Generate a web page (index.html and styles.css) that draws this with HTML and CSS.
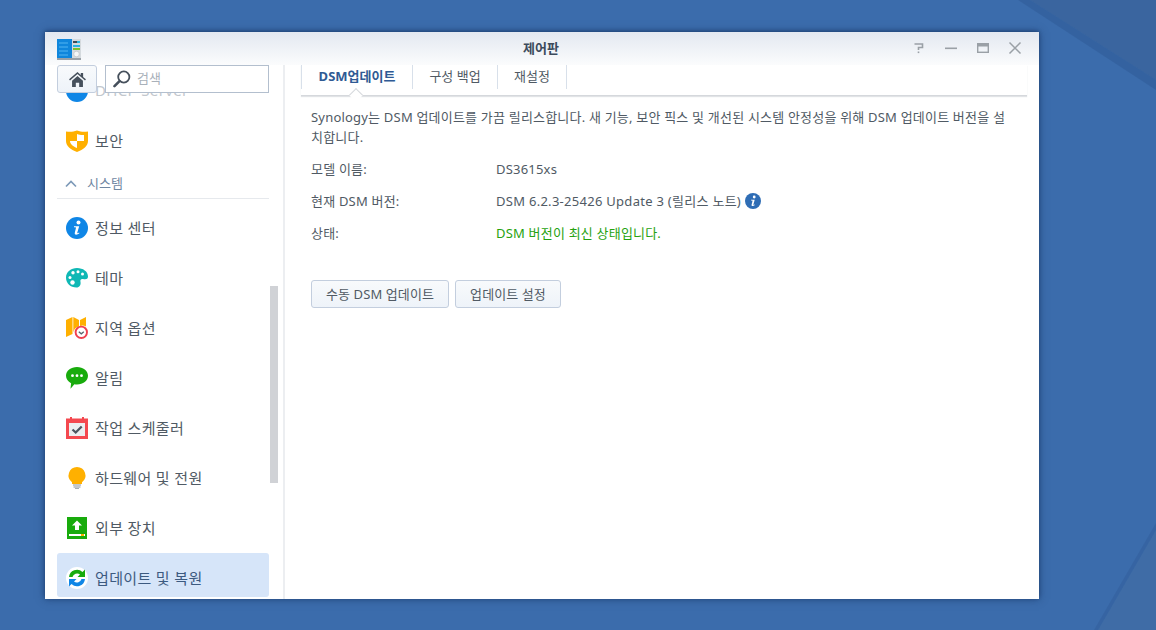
FILE: index.html
```html
<!DOCTYPE html>
<html lang="ko">
<head>
<meta charset="utf-8">
<title>제어판</title>
<link rel="stylesheet" href="styles.css">
</head>
<body>
<div class="desktop">
  <svg class="wallpaper" viewBox="0 0 1156 630" aria-hidden="true">
    <polygon points="1030,0 1156,80 1156,0" fill="#3a659f"/>
    <polygon points="1018,0 1030,0 1156,80 1156,90" fill="#2f5b97" opacity=".55"/>
    <polygon points="1156,530 1098,630 1156,630" fill="#3f6ca6"/>
    <polygon points="1156,530 1098,630 1094,630 1156,523" fill="#2f5b97" opacity=".4"/>
  </svg>
  <section class="window">
    <header class="titlebar">
      <svg class="app-icon" viewBox="0 0 24 22" aria-hidden="true">
        <rect x="0" y="1" width="24" height="20" fill="#d5dade"/>
        <rect x="0" y="1" width="15" height="19" fill="#0f86dc"/>
        <path d="M2 5h9M2 9h9M2 13h9M2 17h9" stroke="#53b5f2" stroke-width="1"/>
        <rect x="0" y="20" width="24" height="2" fill="#9aa1a8"/>
        <rect x="16" y="3" width="7" height="2" fill="#3f4a55"/>
        <rect x="20" y="3" width="3" height="2" fill="#28b4e0"/>
        <rect x="16" y="7" width="7" height="2" fill="#28b4e0"/>
        <rect x="16" y="10" width="7" height="2" fill="#7cc02e"/>
        <circle cx="19.500" cy="16" r="2.800" fill="#f5f7f8" stroke="#b5bcc2" stroke-width=".6"/>
      </svg>
      <h1 class="title">제어판</h1>
      <div class="controls">
        <svg viewBox="0 0 14 14" class="ctl" aria-hidden="true"><path d="M2.500 3h8v3.500H6.500V9" fill="none" stroke="#9aa0a6" stroke-width="1.600"/><rect x="5.700" y="10.500" width="1.600" height="1.600" fill="#9aa0a6"/></svg>
        <svg viewBox="0 0 14 14" class="ctl" aria-hidden="true"><rect x="1" y="6.500" width="12" height="1.600" fill="#9aa0a6"/></svg>
        <svg viewBox="0 0 14 14" class="ctl" aria-hidden="true"><rect x="1.700" y="2.700" width="10.600" height="8.600" fill="none" stroke="#9aa0a6" stroke-width="1.400"/><rect x="1.700" y="2.500" width="10.600" height="3" fill="#9aa0a6"/></svg>
        <svg viewBox="0 0 14 14" class="ctl" aria-hidden="true"><path d="M1.500 1.500l11 11M12.500 1.500l-11 11" stroke="#9aa0a6" stroke-width="1.500"/></svg>
      </div>
    </header>
    <div class="body">
      <aside class="sidebar">
        <div class="toolbar">
          <button class="home" type="button" aria-label="홈">
            <svg viewBox="0 0 18 16" aria-hidden="true"><path d="M9 0L0 7.800l1 1.200L9 2.200 17 9l1-1.200-3-2.600V1h-2.500v2.100z" fill="#46505c"/><path d="M3.200 9.200L9 4.200l5.800 5V16h-4v-4.500H7.200V16h-4z" fill="#46505c"/></svg>
          </button>
          <div class="search">
            <svg viewBox="0 0 18 18" aria-hidden="true"><circle cx="10.800" cy="7" r="5.600" fill="none" stroke="#46505c" stroke-width="1.800"/><path d="M6.500 11.200L1.500 16.200" stroke="#46505c" stroke-width="2.600" stroke-linecap="round"/></svg>
            <span>검색</span>
          </div>
        </div>
        <nav class="menu">
          <div class="item item-faded">
            <svg class="ico" viewBox="0 0 22 22" aria-hidden="true"><circle cx="11" cy="11" r="11" fill="#0f86e6"/><circle cx="5.500" cy="9" r="2.200" fill="#fff"/><circle cx="11" cy="9" r="2.200" fill="#fff"/><circle cx="16.500" cy="9" r="2.200" fill="#fff"/></svg>
            <span>DHCP Server</span>
          </div>
          <div class="item">
            <svg class="ico" viewBox="0 0 22 22" aria-hidden="true"><path d="M11 0.500C15 2 18 2 22 1.500V11c0 5-4.500 8.500-11 11C4.500 19.500 0 16 0 11V1.500C4 2 7 2 11 0.500z" fill="#ffb000"/><path d="M11 4C13.500 5 15.500 5.200 18 5V11H11zM11 11v7C7.500 16.500 4 14.500 4 11z" fill="#fff"/></svg>
            <span>보안</span>
          </div>
          <div class="group">
            <svg viewBox="0 0 12 8" aria-hidden="true"><path d="M1 6.500L6 1.500l5 5" fill="none" stroke="#7d9ab8" stroke-width="1.700"/></svg>
            <span>시스템</span>
          </div>
          <div class="item">
            <svg class="ico" viewBox="0 0 22 22" aria-hidden="true"><circle cx="11" cy="11" r="11" fill="#0f86e6"/><circle cx="12.500" cy="5.500" r="2" fill="#fff"/><path d="M8 9.200h5.200L11.300 15.500c-.2.800.4 1 1.800 0l.3.800c-2 1.800-5.200 2.200-4.600-.5l1.200-5c.1-.6-.6-.8-2-.6z" fill="#fff"/></svg>
            <span>정보 센터</span>
          </div>
          <div class="item">
            <svg class="ico" viewBox="0 0 22 20" aria-hidden="true"><path d="M11 0C17 0 22 3.500 22 8.500c0 3-2.500 3-5 2.500-2-.4-3 .8-2.500 3 .6 2.800-1 5.500-4 5.500C4.500 19.500 0 15.500 0 9.500 0 4 5 0 11 0z" fill="#0fb8b5"/><circle cx="7" cy="4.800" r="1.700" fill="#fff"/><circle cx="12" cy="3.800" r="1.500" fill="#fff"/><circle cx="16.500" cy="6" r="1.500" fill="#fff"/><circle cx="4" cy="9.500" r="1.500" fill="#fff"/><circle cx="6.500" cy="14.500" r="2.200" fill="#fff"/></svg>
            <span>테마</span>
          </div>
          <div class="item">
            <svg class="ico" viewBox="0 0 22 22" aria-hidden="true"><path d="M0 3L6.500 0v17L0 20zM7.300 0L13 3v6.500a7.500 7.500 0 0 0-5.700 6zM14 3L20 0v9.500a7.500 7.500 0 0 0-6-.5z" fill="#ffb000"/><circle cx="15.300" cy="15.300" r="5.700" fill="#fff" stroke="#f0404f" stroke-width="1.900"/><path d="M12.800 14.800l2.500 2 2.500-2" fill="none" stroke="#5a636d" stroke-width="1.300"/></svg>
            <span>지역 옵션</span>
          </div>
          <div class="item">
            <svg class="ico" viewBox="0 0 22 22" aria-hidden="true"><path d="M11 0c6.100 0 11 3.800 11 8.700s-4.900 8.700-11 8.700c-.9 0-1.800-.1-2.600-.2L4.500 21.800l.6-5.600C2 14.600 0 11.900 0 8.700 0 3.800 4.900 0 11 0z" fill="#18ab0c"/><circle cx="6.500" cy="8.700" r="1.400" fill="#fff"/><circle cx="11" cy="8.700" r="1.400" fill="#fff"/><circle cx="15.500" cy="8.700" r="1.400" fill="#fff"/></svg>
            <span>알림</span>
          </div>
          <div class="item">
            <svg class="ico" viewBox="0 0 22 22" aria-hidden="true"><rect x="0" y="1.500" width="22" height="20.500" fill="#f4484f"/><rect x="3" y="6" width="16" height="13" fill="#eceef0"/><rect x="4" y="0" width="2" height="3.500" fill="#f4484f"/><rect x="16" y="0" width="2" height="3.500" fill="#f4484f"/><path d="M6.500 12.500l3.200 3 6-6" fill="none" stroke="#4c5560" stroke-width="2.300"/></svg>
            <span>작업 스케줄러</span>
          </div>
          <div class="item">
            <svg class="ico" viewBox="0 0 22 22" aria-hidden="true"><path d="M11 0a8.500 8.500 0 0 1 5 15.300V17H6v-1.700A8.500 8.500 0 0 1 11 0z" fill="#ffb000"/><path d="M7 18h8M7.500 20h7M9 21.700h4" stroke="#8a929b" stroke-width="1.100"/></svg>
            <span>하드웨어 및 전원</span>
          </div>
          <div class="item">
            <svg class="ico" viewBox="0 0 22 22" aria-hidden="true"><rect x="1" y="0" width="20" height="22" fill="#18ab0c"/><path d="M11 3.500l5 5h-3v4.500H9V8.500H6z" fill="#fff"/><rect x="3" y="17" width="16" height="2" fill="#fff"/><rect x="15" y="17" width="3" height="2" fill="#ffb000"/></svg>
            <span>외부 장치</span>
          </div>
          <div class="item item-active">
            <svg class="ico" viewBox="0 0 22 22" aria-hidden="true"><circle cx="11" cy="11" r="11" fill="#fff"/><path d="M3 10A8 8 0 0 1 16.500 5L19 2.500V10h-7.500l2.500-2.500A4.800 4.800 0 0 0 6.500 10z" fill="#18ab0c"/><path d="M19 12A8 8 0 0 1 5.500 17L3 19.500V12h7.500L8 14.500A4.800 4.800 0 0 0 15.500 12z" fill="#0f86e6"/></svg>
            <span>업데이트 및 복원</span>
          </div>
        </nav>
        <div class="scrollbar" aria-hidden="true"></div>
      </aside>
      <main class="content">
        <nav class="tabs">
          <a class="tab tab-active">DSM업데이트</a>
          <a class="tab tab-backup">구성 백업</a>
          <a class="tab tab-reset">재설정</a>
        </nav>
        <div class="panel">
          <p class="intro">Synology는 DSM 업데이트를 가끔 릴리스합니다. 새 기능, 보안 픽스 및 개선된 시스템 안정성을 위해 DSM 업데이트 버전을 설치합니다.</p>
          <dl class="facts">
            <div class="fact"><dt>모델 이름:</dt><dd>DS3615xs</dd></div>
            <div class="fact"><dt>현재 DSM 버전:</dt><dd><span class="release">DSM 6.2.3-25426 Update 3 (릴리스 노트)</span><svg class="info" viewBox="0 0 16 16" aria-hidden="true"><circle cx="8" cy="8" r="8" fill="#2f6db5"/><circle cx="9.200" cy="4" r="1.400" fill="#fff"/><path d="M6 6.800h3.700L8.400 11.500c-.1.500.3.700 1.300 0l.2.600c-1.500 1.300-3.700 1.500-3.300-.3l.9-3.800c.1-.4-.5-.5-1.500-.4z" fill="#fff"/></svg></dd></div>
            <div class="fact"><dt>상태:</dt><dd class="ok">DSM 버전이 최신 상태입니다.</dd></div>
          </dl>
          <div class="actions">
            <button class="btn btn-manual" type="button">수동 DSM 업데이트</button>
            <button class="btn btn-settings" type="button">업데이트 설정</button>
          </div>
        </div>
      </main>
    </div>
  </section>
</div>
</body>
</html>
```

FILE: styles.css
```css
* { box-sizing: border-box; }
html, body { margin: 0; padding: 0; }
body {
  width: 1156px;
  height: 630px;
  overflow: hidden;
  font-family: "Noto Sans", "Noto Sans CJK KR", sans-serif;
  font-size: 13px;
  color: #505a64;
}
.desktop {
  position: relative;
  width: 1156px;
  height: 630px;
  overflow: hidden;
  background: #3b6cac;
}
.wallpaper {
  position: absolute;
  inset: 0;
  width: 1156px;
  height: 630px;
}
.window {
  position: absolute;
  left: 45px;
  top: 32px;
  width: 994px;
  height: 567px;
  display: flex;
  flex-direction: column;
  background: #fff;
  box-shadow: 0 0 8px rgba(15, 40, 80, .55), 0 -1px 3px rgba(15, 40, 80, .4);
  overflow: hidden;
}
.titlebar {
  position: relative;
  flex: none;
  height: 33px;
  display: flex;
  align-items: center;
  justify-content: center;
  padding-bottom: 3px;
  background: linear-gradient(#e3e8f0, #fbfcfd);
}
.app-icon {
  position: absolute;
  left: 12px;
  top: 6px;
  width: 24px;
  height: 22px;
}
.title {
  margin: 0 2px 0 0;
  font-size: 13px;
  font-weight: 700;
  color: #3c4a5c;
}
.controls {
  position: absolute;
  right: 17px;
  top: 9px;
  display: flex;
  gap: 18px;
}
.ctl { width: 14px; height: 14px; display: block; }
.body {
  flex: 1;
  min-height: 0;
  display: flex;
}
.sidebar {
  position: relative;
  flex: none;
  width: 240px;
  overflow: hidden;
  border-right: 2px solid #eceef1;
}
.toolbar {
  position: absolute;
  left: 12px;
  top: 0;
  width: 212px;
  height: 28px;
  display: flex;
  gap: 8px;
  z-index: 2;
}
.home {
  flex: none;
  width: 40px;
  height: 28px;
  padding: 0;
  display: flex;
  align-items: center;
  justify-content: center;
  background: linear-gradient(#f8fafc, #eef3f9);
  border: 1px solid #c3cede;
  border-radius: 3px;
}
.home svg { width: 17px; height: 15px; }
.search {
  flex: 1;
  display: flex;
  align-items: center;
  gap: 6px;
  padding-left: 7px;
  background: #fff;
  border: 1px solid #b3bfce;
  color: #a9b1ba;
}
.search svg { width: 18px; height: 18px; }
.search span { margin-bottom: 3px; }
.menu {
  padding: 1px 12px 0;
  width: 236px;
}
.item {
  height: 50px;
  display: flex;
  align-items: center;
  gap: 7px;
  padding-left: 9px;
  font-size: 15px;
  letter-spacing: .35px;
}
.item span { margin-bottom: 2px; }
.ico { flex: none; width: 22px; height: 22px; }
.item-faded { color: #c2c7cd; }
.item-active {
  background: #d6e5f9;
  border-radius: 3px;
  height: 44px;
  padding-top: 6px;
  color: #3c5a80;
}
.group {
  height: 33px;
  margin-bottom: 4px;
  padding: 3px 0 0 8px;
  display: flex;
  align-items: center;
  gap: 10px;
  border-bottom: 1px solid #e6e9ed;
  color: #6f87a2;
}
.group span { margin-bottom: 2px; }
.group svg { width: 12px; height: 8px; }
.scrollbar {
  position: absolute;
  left: 225px;
  top: 221px;
  width: 8px;
  height: 197px;
  background: #d0d2d6;
}
.content {
  flex: 1;
  min-width: 0;
  padding: 0 12px 0 16px;
}
.tabs {
  position: relative;
  height: 31px;
  display: flex;
  border-bottom: 1px solid #d5d8dc;
  box-shadow: 0 1px 1px rgba(90, 100, 115, .18);
}
.tabs::after {
  content: "";
  position: absolute;
  left: 50px;
  bottom: -5px;
  width: 9px;
  height: 9px;
  background: #fff;
  border-left: 1px solid #d5d8dc;
  border-top: 1px solid #d5d8dc;
  transform: rotate(45deg);
}
.tab {
  height: 24px;
  padding-bottom: 3px;
  display: flex;
  align-items: center;
  justify-content: center;
  border-right: 1px solid #d8e0ea;
  color: #505a64;
}
.tab-active {
  width: 112px;
  border-left: 1px solid #d8e0ea;
  font-weight: 700;
  color: #2f5a94;
}
.tab-backup { width: 85px; }
.tab-reset { width: 69px; }
.panel { padding: 11px 10px 0 10px; }
.intro {
  margin: 0;
  width: 700px;
  line-height: 20px;
  letter-spacing: .2px;
  word-break: break-all;
}
.facts { margin: 6px 0 0; letter-spacing: .2px; }
.fact {
  height: 32px;
  display: flex;
  align-items: center;
  line-height: 20px;
}
.fact dt { width: 185px; flex: none; }
.fact dd {
  margin: 0;
  display: flex;
  align-items: center;
  gap: 4px;
}
.release { letter-spacing: .28px; }
.info { width: 16px; height: 16px; flex: none; }
.ok { color: #26a20f; }
.actions {
  display: flex;
  gap: 6px;
  margin-top: 31px;
}
.btn {
  height: 28px;
  padding: 0 0 2px;
  font: inherit;
  letter-spacing: .1px;
  color: #505a64;
  background: linear-gradient(#f8fafc, #eef3f9);
  border: 1px solid #c3cede;
  border-radius: 3px;
}
.btn-manual { width: 138px; }
.btn-settings { width: 106px; }
```
